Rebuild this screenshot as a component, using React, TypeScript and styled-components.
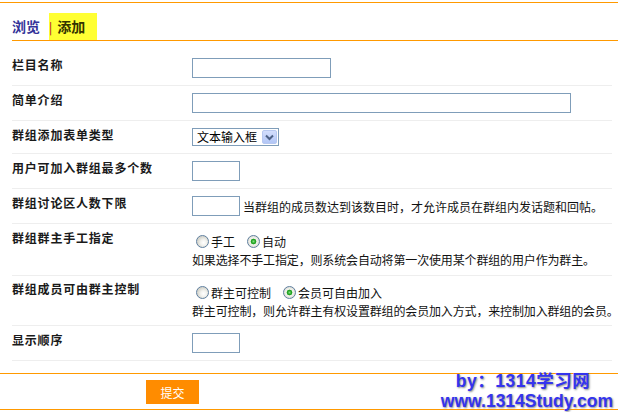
import React from 'react';
import styled, { createGlobalStyle } from 'styled-components';

const GlobalStyle = createGlobalStyle`
  html, body {
    margin: 0;
    padding: 0;
    background: #fff;
  }
  body {
    font-family: "Noto Sans CJK SC", "Liberation Sans", sans-serif;
    font-size: 12px;
    color: #222;
  }
`;

const Page = styled.div`
  position: relative;
  width: 618px;
  height: 412px;
  padding-top: 2px;
  box-sizing: border-box;
  overflow: hidden;
`;

const Header = styled.div`
  border-top: 1px solid #ff9900;
  padding-top: 10px;
`;

const TabBar = styled.div`
  display: flex;
  align-items: stretch;
  height: 27px;
  margin-left: 12px;
  border-bottom: 1px solid #ff9900;
`;

const Tab = styled.div<{ $active?: boolean }>`
  display: flex;
  align-items: center;
  font-size: 14px;
  font-weight: bold;
  line-height: 27px;
  color: ${(p) => (p.$active ? '#333300' : '#333399')};
  background: ${(p) => (p.$active ? '#ffff33' : 'transparent')};
  padding-right: ${(p) => (p.$active ? '12px' : '9px')};
`;

const TabDivider = styled.span`
  color: #990033;
  font-weight: normal;
  font-size: 12px;
  margin-right: 5px;
`;

const Form = styled.div`
  margin: 10px 0 0 12px;
  width: 600px;
`;

const Row = styled.div<{ $pad?: number }>`
  display: grid;
  grid-template-columns: 180px 1fr;
  padding: ${(p) => p.$pad ?? 7}px 0;
  border-bottom: 1px solid #eeeeee;
`;

const Label = styled.div`
  font-weight: bold;
  font-size: 12px;
  line-height: 14px;
  letter-spacing: 0.8px;
  color: #1a1a1a;
`;

const Field = styled.div`
  display: flex;
  align-items: center;
  white-space: nowrap;
`;

const FieldStack = styled.div`
  display: flex;
  flex-direction: column;
  white-space: nowrap;
`;

const TextInput = styled.input<{ $w: number }>`
  box-sizing: border-box;
  width: ${(p) => p.$w}px;
  height: 20px;
  border: 1px solid #7f9db9;
  padding: 0 2px;
  margin: 0;
  background: #fff;
  outline: none;
`;

const Hint = styled.span`
  margin-left: 3px;
  font-size: 12px;
  color: #111;
`;

const Note = styled.div`
  font-size: 12px;
  line-height: 17px;
  letter-spacing: -0.15px;
  color: #111;
`;

const SelectBox = styled.div`
  box-sizing: border-box;
  display: flex;
  align-items: center;
  width: 87px;
  height: 18px;
  border: 1px solid #7f9db9;
  background: #fff;
`;

const SelectText = styled.span`
  padding-left: 4px;
  font-size: 12px;
  line-height: 14px;
  color: #000;
`;

const SelectArrow = styled.span`
  box-sizing: border-box;
  display: flex;
  align-items: center;
  justify-content: center;
  width: 15px;
  height: 14px;
  margin-left: auto;
  margin-right: 1px;
  border: 1px solid #b7c8f0;
  border-radius: 2px;
  background: linear-gradient(#d3defc, #b2c6f6);
`;

const Options = styled.div`
  display: flex;
  align-items: center;
  height: 20px;
`;

const Option = styled.label`
  display: flex;
  align-items: center;
  margin-right: 8px;
  font-size: 12px;
  color: #111;
`;

const Radio = styled.span<{ $checked?: boolean }>`
  box-sizing: border-box;
  width: 13px;
  height: 13px;
  margin: 0 2px 0 4px;
  border-radius: 50%;
  border: 1px solid #5f7f9f;
  background: ${(p) =>
    p.$checked
      ? 'radial-gradient(circle, #7ee07e 0, #21a121 2px, #2fa82f 2.6px, #f4f4f0 3.2px, #dcdcd4 6px)'
      : 'radial-gradient(circle at 60% 60%, #ffffff 0, #f2f2ee 3px, #d6d6ce 6px)'};
`;

const Footer = styled.div`
  margin-top: 12px;
  border-top: 1px solid #ff9900;
  border-bottom: 1px solid #ff9900;
  padding: 6px 0 5px 146px;
`;

const SubmitButton = styled.button`
  display: block;
  width: 53px;
  height: 24px;
  border: none;
  padding: 0;
  background: #ff8c00;
  color: #fff;
  font-family: "Noto Sans CJK SC", sans-serif;
  font-size: 12px;
`;

const Watermark = styled.div`
  position: absolute;
  right: 5px;
  bottom: 1px;
  font-family: "Liberation Sans", "Noto Sans CJK SC", sans-serif;
  font-weight: bold;
  font-size: 17.5px;
  line-height: 20px;
  color: #3434ee;
  text-shadow: 1px 1px 2px #8a8a8a;
  white-space: nowrap;
`;

const WatermarkLine = styled.div<{ $indent?: number }>`
  padding-left: ${(p) => p.$indent ?? 0}px;
  letter-spacing: ${(p) => (p.$indent ? '0.5px' : '0')};
`;

const Chevron = () => (
  <svg width="9" height="7" viewBox="0 0 9 7">
    <path d="M1 1.5 L4.5 5 L8 1.5" fill="none" stroke="#4d6185" strokeWidth="2" />
  </svg>
);

export default function App() {
  return (
    <Page>
      <GlobalStyle />
      <Header>
        <TabBar>
          <Tab>浏览</Tab>
          <Tab $active>
            <TabDivider>|</TabDivider>
            添加
          </Tab>
        </TabBar>
      </Header>

      <Form>
        <Row>
          <Label>栏目名称</Label>
          <Field>
            <TextInput $w={139} />
          </Field>
        </Row>
        <Row>
          <Label>简单介绍</Label>
          <Field>
            <TextInput $w={379} />
          </Field>
        </Row>
        <Row>
          <Label>群组添加表单类型</Label>
          <Field>
            <SelectBox>
              <SelectText>文本输入框</SelectText>
              <SelectArrow>
                <Chevron />
              </SelectArrow>
            </SelectBox>
          </Field>
        </Row>
        <Row>
          <Label>用户可加入群组最多个数</Label>
          <Field>
            <TextInput $w={48} />
          </Field>
        </Row>
        <Row>
          <Label>群组讨论区人数下限</Label>
          <Field>
            <TextInput $w={48} />
            <Hint>当群组的成员数达到该数目时，才允许成员在群组内发话题和回帖。</Hint>
          </Field>
        </Row>
        <Row>
          <Label>群组群主手工指定</Label>
          <FieldStack>
            <Options>
              <Option>
                <Radio />
                手工
              </Option>
              <Option>
                <Radio $checked />
                自动
              </Option>
            </Options>
            <Note>如果选择不手工指定，则系统会自动将第一次使用某个群组的用户作为群主。</Note>
          </FieldStack>
        </Row>
        <Row $pad={6}>
          <Label>群组成员可由群主控制</Label>
          <FieldStack>
            <Options>
              <Option>
                <Radio />
                群主可控制
              </Option>
              <Option>
                <Radio $checked />
                会员可自由加入
              </Option>
            </Options>
            <Note>群主可控制，则允许群主有权设置群组的会员加入方式，来控制加入群组的会员。</Note>
          </FieldStack>
        </Row>
        <Row>
          <Label>显示顺序</Label>
          <Field>
            <TextInput $w={48} />
          </Field>
        </Row>
      </Form>

      <Footer>
        <SubmitButton>提交</SubmitButton>
      </Footer>

      <Watermark>
        <WatermarkLine $indent={15}>by：1314学习网</WatermarkLine>
        <WatermarkLine>www.1314Study.com</WatermarkLine>
      </Watermark>
    </Page>
  );
}
